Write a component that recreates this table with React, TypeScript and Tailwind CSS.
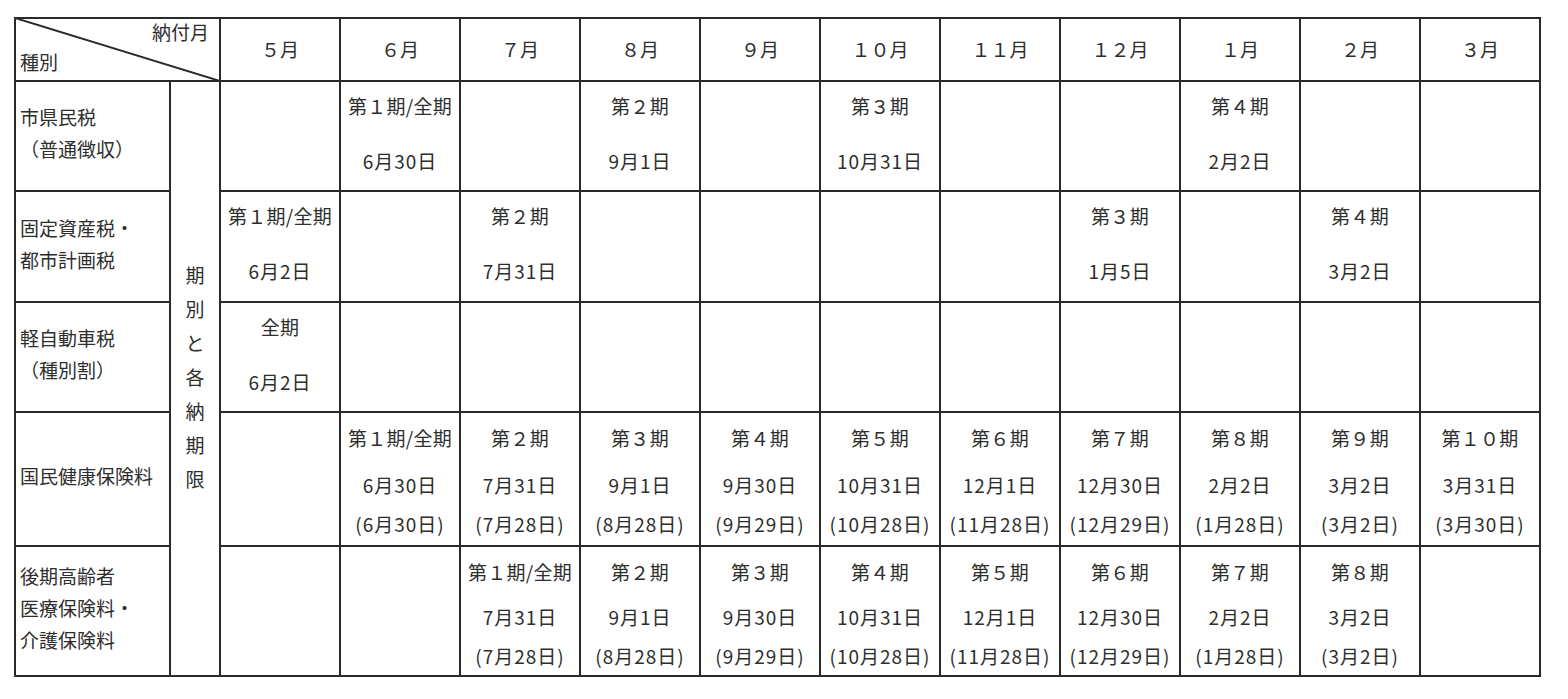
const months = ["５月", "６月", "７月", "８月", "９月", "１０月", "１１月", "１２月", "１月", "２月", "３月"];

type Row = {
  label: string[];
  kind: "two" | "three";
  cells: (string[] | null)[];
};

const rows: Row[] = [
  {
    label: ["市県民税", "（普通徴収）"],
    kind: "two",
    cells: [null, ["第１期/全期", "6月30日"], null, ["第２期", "9月1日"], null, ["第３期", "10月31日"], null, null, ["第４期", "2月2日"], null, null],
  },
  {
    label: ["固定資産税・", "都市計画税"],
    kind: "two",
    cells: [["第１期/全期", "6月2日"], null, ["第２期", "7月31日"], null, null, null, null, ["第３期", "1月5日"], null, ["第４期", "3月2日"], null],
  },
  {
    label: ["軽自動車税", "（種別割）"],
    kind: "two",
    cells: [["全期", "6月2日"], null, null, null, null, null, null, null, null, null, null],
  },
  {
    label: ["国民健康保険料"],
    kind: "three",
    cells: [
      null,
      ["第１期/全期", "6月30日", "(6月30日)"],
      ["第２期", "7月31日", "(7月28日)"],
      ["第３期", "9月1日", "(8月28日)"],
      ["第４期", "9月30日", "(9月29日)"],
      ["第５期", "10月31日", "(10月28日)"],
      ["第６期", "12月1日", "(11月28日)"],
      ["第７期", "12月30日", "(12月29日)"],
      ["第８期", "2月2日", "(1月28日)"],
      ["第９期", "3月2日", "(3月2日)"],
      ["第１０期", "3月31日", "(3月30日)"],
    ],
  },
  {
    label: ["後期高齢者", "医療保険料・", "介護保険料"],
    kind: "three",
    cells: [
      null,
      null,
      ["第１期/全期", "7月31日", "(7月28日)"],
      ["第２期", "9月1日", "(8月28日)"],
      ["第３期", "9月30日", "(9月29日)"],
      ["第４期", "10月31日", "(10月28日)"],
      ["第５期", "12月1日", "(11月28日)"],
      ["第６期", "12月30日", "(12月29日)"],
      ["第７期", "2月2日", "(1月28日)"],
      ["第８期", "3月2日", "(3月2日)"],
      null,
    ],
  },
];

// one payment cell: period on top, due date(s) below
function Entry({ lines, kind, last }: { lines: string[] | null; kind: "two" | "three"; last: boolean }) {
  if (!lines) return <div className="bg-white" />;
  if (kind === "two") {
    return (
      <div className="flex flex-col items-center bg-white pt-[8px] whitespace-nowrap">
        <span className="tracking-[0.3px]">{lines[0]}</span>
        <span className="mt-[23px] tracking-[1px]">{lines[1]}</span>
      </div>
    );
  }
  return (
    <div className="flex flex-col items-center bg-white pt-[9px] whitespace-nowrap">
      <span className="tracking-[0.3px]">{lines[0]}</span>
      <span className={`tracking-[1px] ${last ? "mt-[13px]" : "mt-[15px]"}`}>{lines[1]}</span>
      <span className="mt-[7px] tracking-[1px]">{lines[2]}</span>
    </div>
  );
}

export default function App() {
  return (
    <div
      className="min-h-screen bg-white pl-[14px] pt-[17px] text-[19px] leading-[32px] text-[#2e2e2e]"
      style={{ fontFamily: '"Noto Sans CJK JP", "Noto Sans", sans-serif' }}
    >
      <div className="grid w-max grid-cols-[153px_48px_repeat(11,118px)] grid-rows-[61px_108px_109px_108px_132px_128px] gap-[2px] bg-[#2a2a2a] p-[2px]">
        {/* header corner with diagonal */}
        <div className="relative col-span-2 bg-white">
          <svg className="absolute -left-[1px] -top-[1px] h-[calc(100%+2px)] w-[calc(100%+2px)]" preserveAspectRatio="none" viewBox="0 0 100 100">
            <line x1="0" y1="0" x2="100" y2="100" stroke="#2a2a2a" strokeWidth="2" vectorEffect="non-scaling-stroke" />
          </svg>
          <span className="absolute right-[10px] top-[-3px]">納付月</span>
          <span className="absolute left-[4px] top-[27px]">種別</span>
        </div>
        {months.map((m) => (
          <div key={m} className="flex items-center justify-center bg-white pb-[2px]">
            {m}
          </div>
        ))}

        {rows.map((row, ri) => (
          <div key={ri} className="contents">
            <div className="flex flex-col justify-center bg-white pb-[6px] pl-[4px] whitespace-nowrap">
              {row.label.map((l) => (
                <span key={l}>{l}</span>
              ))}
            </div>
            {ri === 0 && (
              <div className="row-span-5 flex flex-col items-center justify-center bg-white pb-[4px] leading-[34px]">
                {"期別と各納期限".split("").map((c, i) => (
                  <span key={i}>{c}</span>
                ))}
              </div>
            )}
            {row.cells.map((c, ci) => (
              <Entry key={ci} lines={c} kind={row.kind} last={ri === 4} />
            ))}
          </div>
        ))}
      </div>
    </div>
  );
}
